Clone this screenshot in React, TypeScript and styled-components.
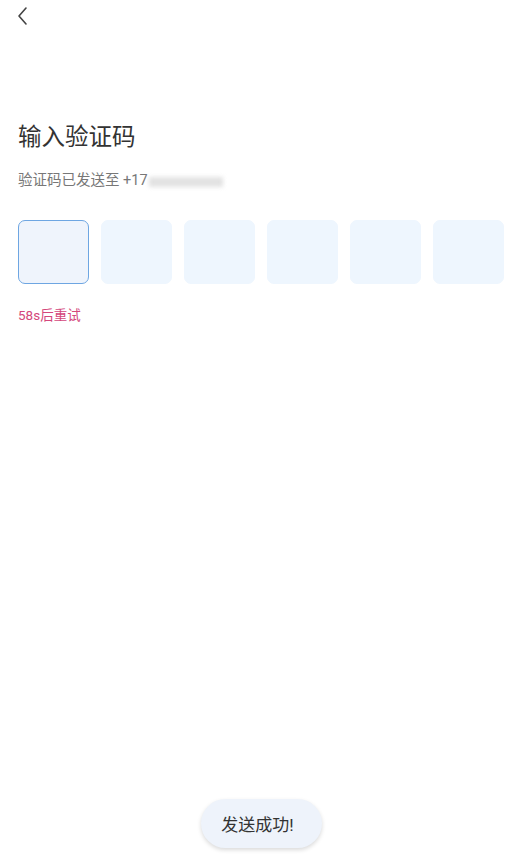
import React from "react";
import styled, { createGlobalStyle } from "styled-components";

const GlobalStyle = createGlobalStyle`
  html, body {
    margin: 0;
    padding: 0;
    background: #fff;
    font-family: Roboto, "Noto Sans CJK SC", sans-serif;
  }
`;

const Page = styled.div`
  position: relative;
  width: 522px;
  height: 865px;
  padding: 0 18px;
  box-sizing: border-box;
  display: flex;
  flex-direction: column;
`;

const BackButton = styled.div`
  height: 32px;
  display: flex;
  align-items: flex-start;
  padding-top: 6px;
  box-sizing: border-box;
  margin-left: -2px;
`;

const Title = styled.h1`
  margin: 90px 0 0;
  font-size: 23.5px;
  line-height: 30px;
  font-weight: 400;
  color: #333;
`;

const Subtitle = styled.div`
  margin-top: 19px;
  font-size: 14.5px;
  line-height: 20px;
  color: #777;
  display: flex;
  align-items: center;
`;

const Masked = styled.span`
  display: inline-block;
  width: 74px;
  height: 10px;
  margin-left: 1px;
  margin-top: 1px;
  background: #d6d6d6;
  filter: blur(2px);
  opacity: 0.7;
`;

const CodeRow = styled.div`
  margin-top: 29px;
  display: flex;
  gap: 12px;
`;

const CodeBox = styled.div<{ $active?: boolean }>`
  width: 71px;
  height: 64px;
  box-sizing: border-box;
  border-radius: 7px;
  background: ${(p) => (p.$active ? "#eff4fc" : "#eef6fe")};
  border: 1px solid ${(p) => (p.$active ? "#6ea6e2" : "#eef6fe")};
`;

const Countdown = styled.div`
  margin-top: 22px;
  font-size: 13.5px;
  line-height: 18px;
  color: #d4477c;
`;

const Toast = styled.div`
  position: absolute;
  left: 201px;
  top: 799px;
  width: 121px;
  height: 49px;
  box-sizing: border-box;
  padding-right: 8px;
  border-radius: 25px;
  background: #eef3fb;
  box-shadow: 0 2px 4px rgba(0, 0, 0, 0.15);
  display: flex;
  align-items: center;
  justify-content: center;
  font-size: 17px;
  color: #333;
`;

const App = () => {
  const boxes = [0, 1, 2, 3, 4, 5];
  return (
    <>
      <GlobalStyle />
      <Page>
        <BackButton>
          <svg width="12" height="20" viewBox="0 0 12 20" fill="none">
            <path d="M10 2 L3 10 L10 18" stroke="#444" strokeWidth="1.6" strokeLinecap="round" strokeLinejoin="round" />
          </svg>
        </BackButton>
        <Title>输入验证码</Title>
        <Subtitle>
          验证码已发送至 +17
          <Masked />
        </Subtitle>
        <CodeRow>
          {boxes.map((i) => (
            <CodeBox key={i} $active={i === 0} />
          ))}
        </CodeRow>
        <Countdown>58s后重试</Countdown>
        <Toast>发送成功!</Toast>
      </Page>
    </>
  );
};

export default App;
